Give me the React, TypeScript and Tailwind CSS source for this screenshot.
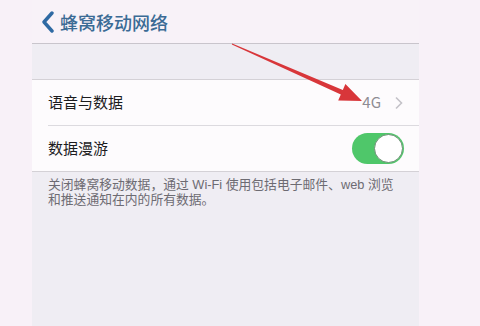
import React from "react";

export default function App() {
  const font = { fontFamily: '"Noto Sans CJK SC", "Noto Sans", sans-serif' };
  const footFont = { fontFamily: '"Liberation Sans", "Noto Sans CJK SC", sans-serif' };
  return (
    <div
      className="relative w-[480px] h-[326px] overflow-hidden bg-[#f8f1f8] flex"
      style={font}
    >
      <div className="w-[32px] shrink-0" />
      <div className="w-[387px] shrink-0 flex flex-col">
        <div className="h-[44px] flex items-center border-b border-[#c9c5cc] bg-[#f8f2f8]">
          <svg width="16" height="22" viewBox="0 0 16 22" className="ml-[8px]">
            <path d="M12 2 L4 11 L12 20" fill="none" stroke="#2f6aa3" strokeWidth="3.4" strokeLinecap="round" strokeLinejoin="round" />
          </svg>
          <span className="ml-[4px] text-[18px] leading-none text-[#3b6b95] font-medium">蜂窝移动网络</span>
        </div>
        <div className="h-[36px] bg-[#efedf3] border-b border-[#d4d1d6]" />
        <div className="bg-[#fdfbfd]">
          <div className="h-[45px] pl-[16px] flex items-center">
            <span className="text-[15px] text-[#1c1c1e]">语音与数据</span>
            <span className="ml-auto text-[15px] text-[#8e8c93]">4G</span>
            <svg width="10" height="14" viewBox="0 0 10 14" className="ml-[13px] mr-[15px]">
              <path d="M2 1.5 L7.5 7 L2 12.5" fill="none" stroke="#c4c2c8" strokeWidth="1.6" />
            </svg>
          </div>
          <div className="ml-[16px] h-px bg-[#dcdadf]" />
          <div className="h-[45px] pl-[16px] flex items-center">
            <span className="text-[15px] text-[#1c1c1e]">数据漫游</span>
            <div className="ml-auto mr-[15px] w-[52px] h-[31px] rounded-full bg-[#4fc76a] relative">
              <div className="absolute right-[1px] top-[1px] w-[29px] h-[29px] rounded-full bg-white border border-[#6b8f73]" />
            </div>
          </div>
        </div>
        <div className="flex-1 bg-[#efedf3] border-t border-[#d4d1d6] px-[16px] pt-[5px]" style={footFont}>
          <p className="text-[12.8px] leading-[15px] text-[#6d6b72] whitespace-nowrap">
            关闭蜂窝移动数据，通过 Wi-Fi 使用包括电子邮件、web 浏览
          </p>
          <p className="text-[12.8px] leading-[15px] text-[#6d6b72]">
            和推送通知在内的所有数据。
          </p>
        </div>
      </div>
      <svg className="absolute left-0 top-0 pointer-events-none" width="480" height="326" viewBox="0 0 480 326">
        <path d="M231.8 44.5 L340.8 94.5 L338.2 100.4 L362 101 L345.4 84 L342.8 89.9 L232.2 43.5 Z" fill="#d8363a" />
      </svg>
    </div>
  );
}
